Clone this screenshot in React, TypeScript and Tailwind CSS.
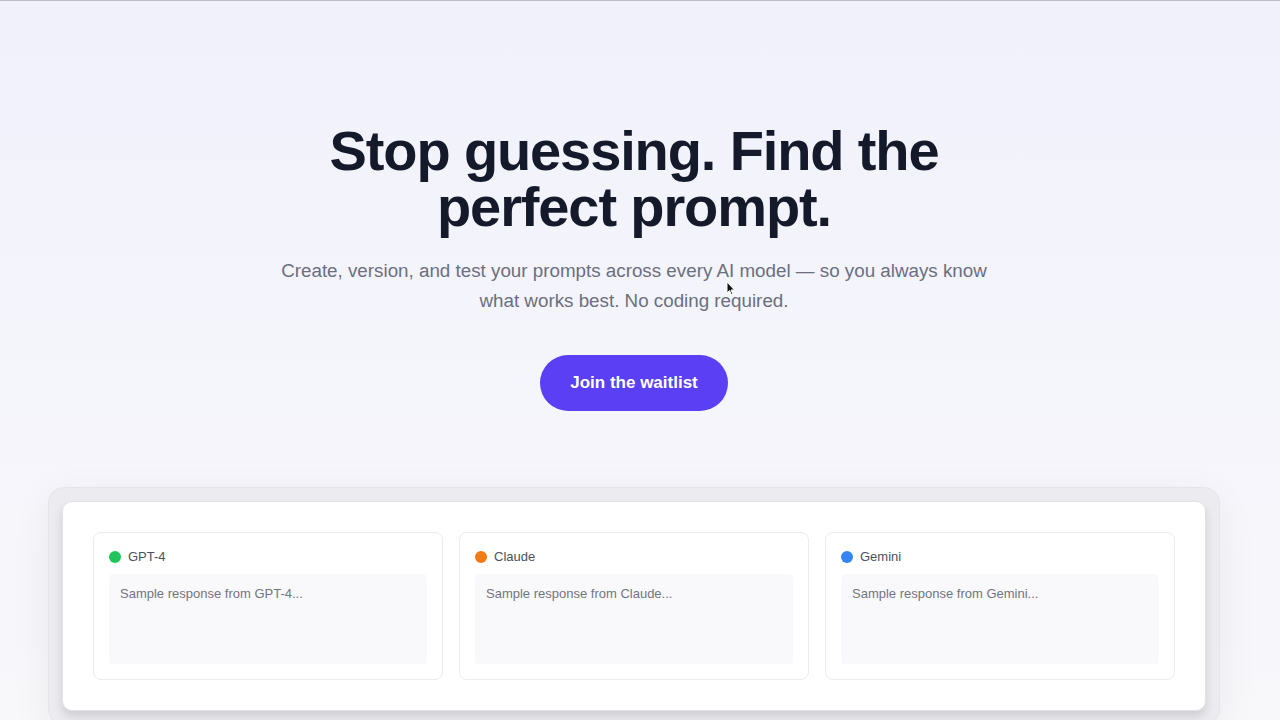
import React from 'react';

type Model = { name: string; dot: string };

const models: Model[] = [
  { name: 'GPT-4', dot: 'bg-[#1fc45a]' },
  { name: 'Claude', dot: 'bg-[#f57a14]' },
  { name: 'Gemini', dot: 'bg-[#3585f5]' },
];

const ModelCard: React.FC<{ model: Model }> = ({ model }) => (
  <div className="rounded-[8px] border border-[#ececf0] bg-white px-[15px] pt-[14px] pb-[15px]">
    <div className="flex h-5 items-center gap-[7px]">
      <span className={`h-3 w-3 rounded-full ${model.dot}`} />
      <span className="text-[13px] text-[#4b5160]">{model.name}</span>
    </div>
    <div className="mt-[7px] h-[90px] rounded-[4px] bg-[#f9f9fb] px-[11px] pt-[10px] text-[13px] leading-5 text-[#71757f]">
      Sample response from {model.name}...
    </div>
  </div>
);

export default function App() {
  return (
    <div
      className="relative min-h-[720px] overflow-hidden border-t border-[#bdbdc4] bg-gradient-to-b from-[#f1f1fc] to-[#f8f8fb] pr-[12px]"
      style={{ fontFamily: '"Liberation Sans", Arial, sans-serif' }}
    >
      <section className="flex flex-col items-center pt-[122px] text-center">
        <h1 className="text-[56px] font-bold leading-[56px] tracking-[-0.02em] text-[#151a2b]">
          Stop guessing. Find the
          <br />
          perfect prompt.
        </h1>
        <p className="mt-[21px] max-w-[716px] text-[18.8px] leading-[30px] text-[#6b6f7e]">
          Create, version, and test your prompts across every AI model — so you always know what works best. No coding required.
        </p>
        <button
          type="button"
          className="mt-[39px] h-[56px] rounded-full bg-[#5a3ff4] px-[30px] text-[17px] font-bold text-white"
        >
          Join the waitlist
        </button>
      </section>

      <div className="mx-auto mt-[76px] max-w-[1172px] rounded-[16px] border border-[#e4e4ea] bg-[#ececf0] p-[13px] shadow-[0_10px_40px_rgba(0,0,0,0.06)]">
        <div className="grid grid-cols-3 gap-4 rounded-[10px] border border-[#e2e2e8] bg-white p-[30px] shadow-[0_6px_10px_rgba(0,0,0,0.12)]">
          {models.map((m) => (
            <ModelCard key={m.name} model={m} />
          ))}
        </div>
      </div>

      {/* mouse pointer from the capture */}
      <svg className="absolute left-[726px] top-[280px]" width="10" height="15" viewBox="0 0 10 15">
        <path d="M1 1 L1 12 L3.5 9.5 L5.5 14 L7 13.3 L5 9 L8.5 9 Z" fill="#111" stroke="#fff" strokeWidth="1" />
      </svg>
    </div>
  );
}
